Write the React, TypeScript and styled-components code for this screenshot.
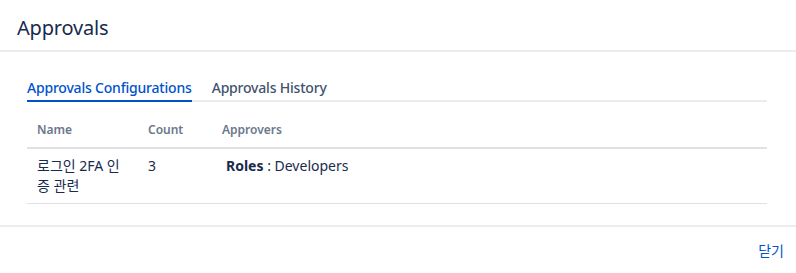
import { createGlobalStyle } from 'styled-components'
import styled from 'styled-components'

const GlobalStyle = createGlobalStyle`
  body {
    margin: 0;
    background: #fff;
    font-family: 'Noto Sans', 'Noto Sans CJK KR', sans-serif;
    color: #172b4d;
  }
`

const Dialog = styled.div`
  width: 796px;
  height: 273px;
  display: flex;
  flex-direction: column;
`

const Header = styled.header`
  flex-shrink: 0;
  height: 50px;
  padding: 0 17px;
  display: flex;
  align-items: center;
  border-bottom: 2px solid #ebecf0;
`

const Title = styled.h1`
  margin: 0 0 -4px;
  font-size: 20px;
  font-weight: 400;
  letter-spacing: -0.2px;
  color: #172b4d;
`

const Body = styled.div`
  flex-shrink: 0;
  padding: 22px 29px 21px 27px;
`

const TabList = styled.div`
  display: flex;
  gap: 20px;
  border-bottom: 2px solid #ebecf0;
`

const Tab = styled.div<{ $active?: boolean }>`
  font-size: 14px;
  font-weight: 500;
  line-height: 20px;
  letter-spacing: -0.2px;
  padding: 4px 0 2px;
  margin-bottom: -2px;
  color: ${(p) => (p.$active ? '#0052cc' : '#42526e')};
  border-bottom: 2px solid ${(p) => (p.$active ? '#0052cc' : 'transparent')};
`

const Table = styled.table`
  width: 100%;
  margin-top: 12px;
  border-collapse: collapse;
  table-layout: fixed;
  font-size: 14px;
`

const Th = styled.th<{ $w?: number }>`
  box-sizing: border-box;
  text-align: left;
  font-size: 12px;
  line-height: 16px;
  font-weight: 600;
  color: #6b778c;
  padding: 8px 10px 9px;
  border-bottom: 2px solid #dfe1e6;
  width: ${(p) => (p.$w ? `${p.$w}px` : 'auto')};
`

const Td = styled.td`
  vertical-align: top;
  padding: 7px 10px;
  line-height: 20px;
  color: #172b4d;
  border-bottom: 1px solid #dfe1e6;
`

const Approver = styled.span`
  padding-left: 4px;

  b {
    font-weight: 700;
  }
`

const Footer = styled.footer`
  flex-shrink: 0;
  border-top: 2px solid #ebecf0;
  display: flex;
  justify-content: flex-end;
  padding: 14px 12px;
`

const CloseButton = styled.button`
  border: none;
  background: none;
  padding: 0;
  font-family: inherit;
  font-size: 14px;
  line-height: 20px;
  color: #0052cc;
  cursor: pointer;
`

export default function App() {
  return (
    <>
      <GlobalStyle />
      <Dialog>
        <Header>
          <Title>Approvals</Title>
        </Header>
        <Body>
          <TabList>
            <Tab $active>Approvals Configurations</Tab>
            <Tab>Approvals History</Tab>
          </TabList>
          <Table>
            <thead>
              <tr>
                <Th $w={111}>Name</Th>
                <Th $w={74}>Count</Th>
                <Th>Approvers</Th>
              </tr>
            </thead>
            <tbody>
              <tr>
                <Td>로그인 2FA 인증 관련</Td>
                <Td>3</Td>
                <Td>
                  <Approver>
                    <b>Roles</b> : Developers
                  </Approver>
                </Td>
              </tr>
            </tbody>
          </Table>
        </Body>
        <Footer>
          <CloseButton>닫기</CloseButton>
        </Footer>
      </Dialog>
    </>
  )
}
